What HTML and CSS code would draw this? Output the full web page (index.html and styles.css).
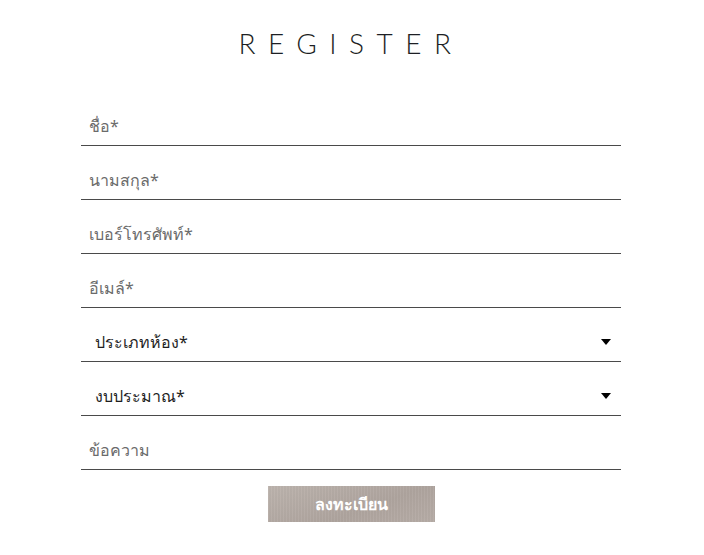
FILE: index.html
```html
<!DOCTYPE html>
<html lang="th">
<head>
<meta charset="UTF-8" />
<meta name="viewport" content="width=device-width, initial-scale=1" />
<title>Register</title>
<link rel="stylesheet" href="styles.css">
</head>
<body>

  <!-- Register form -->
  <div class="register">
    <h1 class="title">REGISTER</h1>

    <form class="register-form">
      <input type="text" class="field" placeholder="ชื่อ*" />
      <input type="text" class="field" placeholder="นามสกุล*" />
      <input type="tel" class="field" placeholder="เบอร์โทรศัพท์*" />
      <input type="email" class="field" placeholder="อีเมล์*" />

      <div class="select-wrap">
        <select class="field select">
          <option>ประเภทห้อง*</option>
        </select>
      </div>
      <div class="select-wrap">
        <select class="field select">
          <option>งบประมาณ*</option>
        </select>
      </div>

      <input type="text" class="field" placeholder="ข้อความ" />

      <button type="button" class="submit-btn">ลงทะเบียน</button>
    </form>
  </div>

</body>
</html>
```

FILE: styles.css
```css
body {
  margin: 0;
  padding-right: 2px;
  background: #fff;
  font-family: Tahoma, "Noto Sans", "DejaVu Sans", sans-serif;
  color: #222;
}

.register {
  width: 540px;
  margin: 0 auto;
  padding-top: 29px;
}

/* Title */
.title {
  margin: 0 0 10px;
  text-align: center;
  font-family: "Lato", "Open Sans", sans-serif;
  font-weight: 300;
  font-size: 28px;
  line-height: 28px;
  letter-spacing: 12.5px;
  color: #1d1f24;
}

/* Fields */
.register-form {
  display: flex;
  flex-direction: column;
  padding-top: 25px;
}
.field {
  display: block;
  width: 100%;
  height: 54px;
  box-sizing: border-box;
  padding: 14px 8px 0;
  border: none;
  border-bottom: 1px solid #4a4a4a;
  background: transparent;
  font-family: inherit;
  font-size: 16px;
  color: #222;
  outline: none;
}
.field::placeholder {
  color: #6b6b6b;
}

.select-wrap {
  position: relative;
}
.select {
  appearance: none;
  -webkit-appearance: none;
  padding-left: 14px;
  color: #1e1e1e;
}
.select-wrap::after {
  content: "";
  position: absolute;
  right: 10px;
  top: 31px;
  border-left: 5px solid transparent;
  border-right: 5px solid transparent;
  border-top: 6px solid #000;
  pointer-events: none;
}

/* Button */
.submit-btn {
  align-self: center;
  width: 167px;
  height: 36px;
  margin-top: 16px;
  border: none;
  border-radius: 0;
  background-color: #b4aaa4;
  background-image:
    repeating-linear-gradient(90deg, rgba(255,255,255,0.04) 0 1px, rgba(0,0,0,0.02) 1px 3px),
    linear-gradient(160deg, #bcb3ad, #aea49e 60%, #b6aca6);
  color: #fff;
  font-family: inherit;
  font-size: 16px;
  font-weight: bold;
  cursor: pointer;
}
```
